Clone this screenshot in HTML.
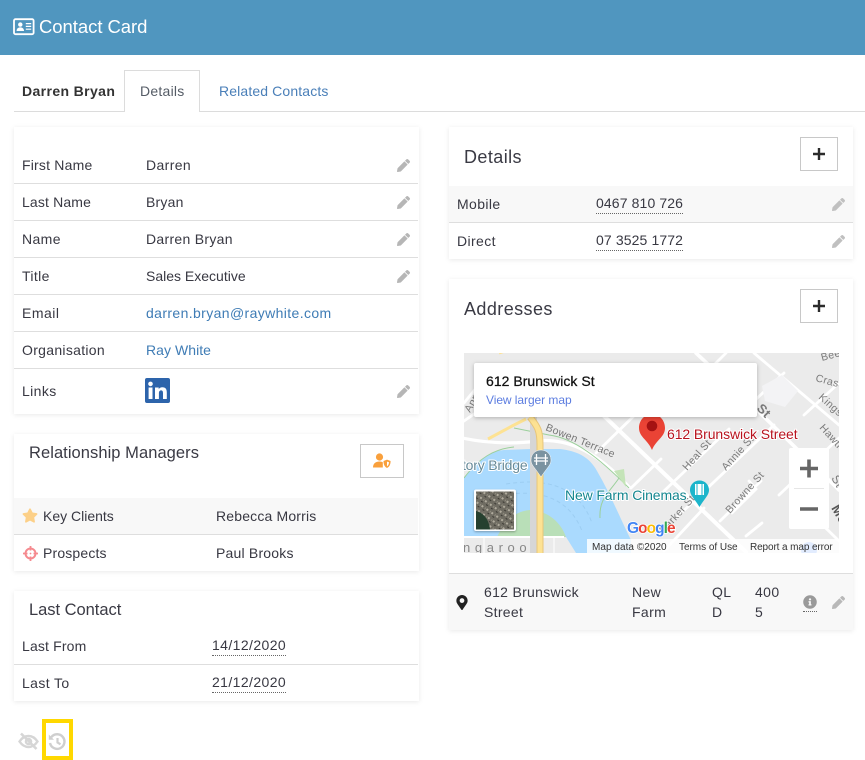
<!DOCTYPE html>
<html><head><meta charset="utf-8"><title>Contact Card</title>
<style>
*{box-sizing:border-box}
html,body{margin:0;padding:0;background:#fff}
body{width:865px;height:760px;position:relative;overflow:hidden;font:14px/20px "Liberation Sans",sans-serif;color:#383842;letter-spacing:.38px}
.hdr{position:absolute;left:0;top:0;width:865px;height:55px;background:#5096bf}
.t{position:absolute;white-space:nowrap;line-height:20px}
.card{position:absolute;background:#fff;box-shadow:0 1px 5px rgba(0,0,0,.09)}
.ln{position:absolute;height:1px;background:#dedede}
.bg{position:absolute;background:#f8f8f8}
.h{font-size:17.5px;letter-spacing:.42px;color:#3a3a44}
.a{color:#3f7cb5}
.d{border-bottom:1px dotted #666;line-height:19px}
.btn{position:absolute;width:38px;height:34px;border:1px solid #c8c8c8;background:#fff}
svg{position:absolute;display:block}
</style></head><body>
<div class="hdr"></div>
<svg style="left:13px;top:18px" width="22" height="18" viewBox="0 0 22 18"><rect x="1" y="1.2" width="19.6" height="15" rx="1.5" fill="none" stroke="#fff" stroke-width="1.8"/><circle cx="7.3" cy="6.6" r="2.2" fill="#fff"/><path d="M3.6 13c0-2.600 1.600-3.600 3.700-3.600s3.700 1 3.700 3.600z" fill="#fff"/><path d="M12.800 5.600h5.400M12.800 8.400h5.400M12.800 11.200h5.400" stroke="#fff" stroke-width="1.200"/></svg>
<div class="t" style="left:39px;top:17px;font-size:18.5px;color:#fff;letter-spacing:-.05px">Contact Card</div>

<div class="ln" style="left:14px;top:111px;width:851px;background:#dcdcdc"></div>
<div style="position:absolute;left:124px;top:70px;width:76px;height:42px;background:#fff;border:1px solid #dcdcdc;border-bottom:0"></div>
<div class="t" style="left:22px;top:81px;font-weight:bold;letter-spacing:.38px;color:#333">Darren Bryan</div>
<div class="t" style="left:140px;top:81px;color:#555c66;letter-spacing:.25px">Details</div>
<div class="t a" style="left:219px;top:81px;color:#4a7fb8;letter-spacing:.13px">Related Contacts</div>

<!-- card 1 -->
<div class="card" style="left:14px;top:127px;width:405px;height:287px"></div>
<div class="ln" style="left:14px;top:183px;width:404px"></div>
<div class="ln" style="left:14px;top:220px;width:404px"></div>
<div class="ln" style="left:14px;top:257px;width:404px"></div>
<div class="ln" style="left:14px;top:294px;width:404px"></div>
<div class="ln" style="left:14px;top:331px;width:404px"></div>
<div class="ln" style="left:14px;top:368px;width:404px"></div>
<div class="t" style="left:22px;top:155px;letter-spacing:.2px">First Name</div><div class="t" style="left:146px;top:155px">Darren</div>
<div class="t" style="left:22px;top:192px;letter-spacing:.15px">Last Name</div><div class="t" style="left:146px;top:192px;letter-spacing:.2px">Bryan</div>
<div class="t" style="left:22px;top:229px">Name</div><div class="t" style="left:146px;top:229px;letter-spacing:.3px">Darren Bryan</div>
<div class="t" style="left:22px;top:266px">Title</div><div class="t" style="left:146px;top:266px;letter-spacing:0">Sales Executive</div>
<div class="t" style="left:22px;top:303px;letter-spacing:.5px">Email</div><div class="t a" style="left:146px;top:303px">darren.bryan@raywhite.com</div>
<div class="t" style="left:22px;top:340px;letter-spacing:.3px">Organisation</div><div class="t a" style="left:146px;top:340px;letter-spacing:.05px">Ray White</div>
<div class="t" style="left:22px;top:381px">Links</div>
<svg style="left:145px;top:378px" width="25" height="25" viewBox="0 0 25 25"><rect width="25" height="25" rx="2" fill="#2d64ab"/><rect x="3.6" y="9.5" width="3.9" height="11.5" fill="#fff"/><circle cx="5.5" cy="5.9" r="2.3" fill="#fff"/><path d="M10 9.500h3.700v1.600c.7-1.100 2-1.900 3.700-1.900 3.200 0 4.400 2 4.400 5.200V21H18v-5.800c0-1.600-.4-2.800-1.900-2.800s-2.200 1.200-2.200 2.800V21H10z" fill="#fff"/></svg>
<svg style="display:none"><defs><path id="pen" d="M497.900 142.100l-46.100 46.100c-4.700 4.700-12.300 4.700-17 0l-111-111c-4.700-4.700-4.700-12.300 0-17l46.100-46.100c18.700-18.700 49.100-18.700 67.900 0l60.100 60.100c18.800 18.700 18.800 49.100 0 67.900zM284.200 99.800L21.600 362.400.4 483.900c-2.900 16.400 11.400 30.600 27.800 27.800l121.500-21.300 262.600-262.600c4.700-4.700 4.700-12.300 0-17l-111-111c-4.800-4.700-12.400-4.700-17.100 0z"/></defs></svg>
<svg style="left:397px;top:159px" width="13" height="13" viewBox="0 0 512 512" fill="#b6b6b6"><use href="#pen"/></svg>
<svg style="left:397px;top:196px" width="13" height="13" viewBox="0 0 512 512" fill="#b6b6b6"><use href="#pen"/></svg>
<svg style="left:397px;top:233px" width="13" height="13" viewBox="0 0 512 512" fill="#b6b6b6"><use href="#pen"/></svg>
<svg style="left:397px;top:270px" width="13" height="13" viewBox="0 0 512 512" fill="#b6b6b6"><use href="#pen"/></svg>
<svg style="left:397px;top:385px" width="13" height="13" viewBox="0 0 512 512" fill="#b6b6b6"><use href="#pen"/></svg>

<!-- card 2 -->
<div class="card" style="left:14px;top:434px;width:405px;height:137px"></div>
<div class="t h" style="left:29px;top:443px;font-size:16.5px;letter-spacing:.06px">Relationship Managers</div>
<div class="btn" style="left:360px;top:444px;width:44px"></div>
<svg style="left:373px;top:453px" width="18" height="16" viewBox="0 0 18 16"><circle cx="6.5" cy="4" r="3.6" fill="#f9a03c"/><path d="M0 14.500c0-4 2.600-6 6.500-6 1.300 0 2.400.2 3.300.7v5.300H0z" fill="#f9a03c"/><path d="M10.500 8l3.500-1.400L17.600 8c0 3.600-1.400 6-3.600 7-2.200-1-3.500-3.400-3.500-7z" fill="#f9a03c"/><path d="M14 8.600l2 .7c-.1 2-.8 3.200-2 4z" fill="#fff"/></svg>
<div class="bg" style="left:14px;top:498px;width:404px;height:36px"></div>
<div class="ln" style="left:14px;top:534px;width:404px"></div>
<svg style="left:22px;top:508px" width="16" height="15" viewBox="0 0 576 512" fill="#fcd088"><path d="M259.300 17.800L194 150.200 47.900 171.500c-26.200 3.800-36.700 36.100-17.700 54.600l105.700 103-25 145.500c-4.500 26.300 23.200 46 46.400 33.700L288 439.600l130.700 68.700c23.200 12.200 50.900-7.400 46.400-33.700l-25-145.500 105.700-103c19-18.500 8.500-50.800-17.700-54.600L382 150.200 316.700 17.800c-11.700-23.600-45.600-23.900-57.400 0z"/></svg>
<div class="t" style="left:43px;top:506px;letter-spacing:0">Key Clients</div><div class="t" style="left:216px;top:506px;letter-spacing:.17px">Rebecca Morris</div>
<svg style="left:23px;top:546px" width="15" height="15" viewBox="0 0 15 15" fill="none" stroke="#f58a8f"><circle cx="7.5" cy="7.5" r="5" stroke-width="2"/><path d="M7.500 0v4.500M7.500 10.500V15M0 7.500h4.500M10.500 7.500H15" stroke-width="1.800"/><circle cx="7.5" cy="7.5" r=".9" fill="#f58a8f" stroke="none"/></svg>
<div class="t" style="left:43px;top:543px;letter-spacing:.16px">Prospects</div><div class="t" style="left:216px;top:543px;letter-spacing:.2px">Paul Brooks</div>

<!-- card 3 -->
<div class="card" style="left:14px;top:591px;width:405px;height:110px"></div>
<div class="t h" style="left:29px;top:600px;font-size:16.5px;letter-spacing:-.03px">Last Contact</div>
<div class="ln" style="left:14px;top:664px;width:404px"></div>
<div class="t" style="left:22px;top:636px;letter-spacing:.16px">Last From</div><div class="t d" style="left:212px;top:636px;letter-spacing:.4px">14/12/2020</div>
<div class="t" style="left:22px;top:673px">Last To</div><div class="t d" style="left:212px;top:673px;letter-spacing:.4px">21/12/2020</div>
<svg style="left:18px;top:732px" width="21" height="19" viewBox="0 0 21 19" fill="none" stroke="#d6d6d6" stroke-width="2.400"><path d="M1.500 9.500C4 5.800 7 4 10.500 4s6.500 1.800 9 5.500c-2.500 3.700-5.500 5.500-9 5.500s-6.500-1.800-9-5.500z"/><circle cx="10.500" cy="9.500" r="2.600"/><path d="M3 1.500l15.500 15.500" stroke-width="2.600"/></svg>
<div style="position:absolute;left:42px;top:719px;width:31px;height:41px;border:4px solid #ffd800"></div>
<svg style="left:48px;top:733px" width="18" height="18" viewBox="0 0 18 18" fill="none" stroke="#cfcfcf" stroke-width="2.400"><path d="M3.300 4.200A7.300 7.300 0 1 1 2 10"/><path d="M.8 1.500v5.200H6z" fill="#cfcfcf" stroke="none"/><path d="M9.500 5v4.500l3 1.800" stroke-width="2.200"/></svg>

<!-- right 1 -->
<div class="card" style="left:449px;top:127px;width:404px;height:132px"></div>
<div class="t h" style="left:464px;top:147px;font-size:18px">Details</div>
<div class="btn" style="left:800px;top:137px"></div>
<svg style="left:813px;top:148px" width="12" height="12" viewBox="0 0 12 12"><path d="M6 0v12M0 6h12" stroke="#2b2b2b" stroke-width="2.400"/></svg>
<div class="bg" style="left:449px;top:186px;width:404px;height:36px"></div>
<div class="ln" style="left:449px;top:222px;width:404px"></div>
<div class="t" style="left:457px;top:194px">Mobile</div><div class="t d" style="left:596px;top:194px;letter-spacing:.12px">0467 810 726</div>
<div class="t" style="left:457px;top:231px">Direct</div><div class="t d" style="left:596px;top:231px;letter-spacing:.12px">07 3525 1772</div>
<svg style="left:832px;top:198px" width="13" height="13" viewBox="0 0 512 512" fill="#c0c0c0"><use href="#pen"/></svg>
<svg style="left:832px;top:235px" width="13" height="13" viewBox="0 0 512 512" fill="#c0c0c0"><use href="#pen"/></svg>

<!-- right 2 -->
<div class="card" style="left:449px;top:279px;width:404px;height:351px"></div>
<div class="t h" style="left:464px;top:299px;font-size:18px">Addresses</div>
<div class="btn" style="left:800px;top:289px"></div>
<svg style="left:813px;top:300px" width="12" height="12" viewBox="0 0 12 12"><path d="M6 0v12M0 6h12" stroke="#2b2b2b" stroke-width="2.400"/></svg>

<svg style="left:464px;top:353px" width="375" height="200" viewBox="0 0 375 200" font-family="Liberation Sans, sans-serif">
<defs><pattern id="sat" width="6" height="6" patternUnits="userSpaceOnUse" patternTransform="rotate(35)"><rect width="6" height="6" fill="#6f6c62"/><rect x="0" y="0" width="2" height="2" fill="#b0ab9d"/><rect x="3" y="3" width="2" height="1" fill="#3c3a34"/><rect x="4" y="0" width="1" height="2" fill="#8f8b7e"/></pattern></defs>
<rect width="375" height="200" fill="#ebebeb"/>
<!-- white roads -->
<g stroke="#fff" stroke-width="2.800" fill="none" stroke-linecap="round">
<path d="M140 63L282 199" stroke-width="4"/>
<path d="M232 0L293 57L375 137" stroke-width="3.600"/>
<path d="M290 0L375 72"/>
<path d="M-2 85C30 92 60 90 72 88C100 85 130 95 165 134" stroke-width="3.200"/>
<path d="M132 100L178 55M167 135L197 106M200 138L265 76M213 164L310 72M256 168L297 128M315 142L375 85"/>
<path d="M285 128L292 136L268 160M330 144L375 188M240 155L200 198M282 183L298 170"/>
<path d="M262 0L220 42M320 20L288 50M375 30L340 62"/>
<path d="M0 50L18 28M0 68L26 50"/>
</g>
<path d="M298 33l20-11 16 16-13 16-20-6z" fill="#f3f3f5"/>
<!-- water -->
<path d="M0 125C10 110 25 98 40 97L66 96H96C112 98 125 103 133 118C146 140 156 165 167 187V200H0z" fill="#aadafe"/>
<path d="M33 184C40 170 50 158 66 157C85 158 97 170 102 184z" fill="#b9dfb8"/>
<path d="M0 184H102L112 200H0z" fill="#ebebeb"/>
<path d="M0 184H100" stroke="#fff" stroke-width="2"/><path d="M20 184v16M90 184v16" stroke="#fff"/>
<path d="M42 131Q110 120 128 170M38 142Q100 132 118 178" fill="none" stroke="#9ccdf2" stroke-dasharray="4 3"/>
<!-- green paths -->
<path d="M50 75L85 82C110 85 135 105 165 135M0 125C15 105 30 96 50 94M155 125C145 140 135 145 136 165" fill="none" stroke="#9bd09b"/>
<path d="M150 118l12 16-2-18z" fill="#c4e4b8"/>
<!-- bridge -->
<rect x="66" y="62" width="7" height="138" fill="#d6d6d6"/>
<path d="M66 64C74 74 76 78 76 92V200" fill="none" stroke="#e8c67a" stroke-width="7"/>
<path d="M66 64C74 74 76 78 76 92V200" fill="none" stroke="#fde293" stroke-width="5"/>
<path d="M35 0L50 -5M62 66L50 72M24 86L50 72" fill="none" stroke="#fde293" stroke-width="3"/>
<!-- labels -->
<g fill="#7a7a7a" font-size="10.500">
<text transform="translate(81 77) rotate(22)" fill="#757575" letter-spacing=".3">Bowen Terrace</text>
<text transform="translate(223 118) rotate(-48)">Heal St</text>
<text transform="translate(262 118) rotate(-48)">Annie St</text>
<text transform="translate(266 161) rotate(-48)">Browne St</text>
<text transform="translate(200 181) rotate(-48)">Parker St</text>
<text transform="translate(358 8) rotate(-15)">Beeston</text>
<text transform="translate(351 28) rotate(15)">Crase</text>
<text transform="translate(354 45) rotate(42)">Kingsholme</text>
<text transform="translate(355 75) rotate(48)">Hawthorne</text>
<text transform="translate(6 60) rotate(-60)">Ann</text>
<text transform="translate(292 56) rotate(45)" font-size="13" font-weight="bold">St</text>
<text transform="translate(367 125) rotate(60)" font-size="12">St</text>
<text transform="translate(367 155) rotate(60)" font-size="13" font-weight="bold" fill="#555">Mo</text>
</g>
<text x="-2" y="117" font-size="14" fill="#668a99" textLength="66" stroke="#fff" stroke-width="2" paint-order="stroke">tory Bridge</text>
<text x="-1" y="199" font-size="13" fill="#888" textLength="64" lengthAdjust="spacing">ngaroo</text>
<path d="M87 107c0-6-4.500-10-10-10s-10 4-10 10c0 5 3.500 7 10 17C83.500 114 87 112 87 107z" fill="#7b93a1" stroke="#fff" stroke-width=".5"/>
<path d="M72.500 101v11M81.500 101v11M70 105h14M70 108h14" stroke="#fff" stroke-width="1.300"/>
<text x="101" y="147" font-size="14" fill="#14868f" textLength="122" stroke="#fff" stroke-width="2" paint-order="stroke">New Farm Cinemas</text>
<path d="M245 137c0-5.500-4.200-9.500-9.500-9.500S226 131.500 226 137c0 5 4 8 9.500 17C241 145 245 142 245 137z" fill="#1cb5cb"/>
<rect x="231" y="131" width="9" height="11" fill="#fff"/><path d="M233 131v11M238 131v11" stroke="#1cb5cb"/>
<text x="203" y="86" font-size="14" fill="#b8131e" textLength="131" stroke="#fff" stroke-width="2" paint-order="stroke">612 Brunswick Street</text>
<!-- pin -->
<path d="M201 75c0-8-6-14-13-14s-13 6-13 14c0 9 9 12 13 22c4-10 13-13 13-22z" fill="#ea4335"/><circle cx="188" cy="73" r="5.300" fill="#a51212"/>
<!-- tile -->
<rect x="10" y="136.500" width="42" height="41.500" rx="2" fill="#fff" style="filter:drop-shadow(0 1px 1px rgba(0,0,0,.3))"/>
<rect x="12" y="138.500" width="38" height="38" fill="url(#sat)"/>
<path d="M12 158c8 2 13 9 14 18.500H12z" fill="#26402f"/>
<!-- info window -->
<rect x="10" y="10" width="283" height="54" rx="2" fill="#fff" style="filter:drop-shadow(0 1px 2px rgba(0,0,0,.25))"/>
<text x="22" y="33" font-size="14" fill="#111" stroke="#111" stroke-width=".25" textLength="109">612 Brunswick St</text>
<text x="22" y="51" font-size="12" fill="#5c7de0" textLength="86">View larger map</text>
<!-- google -->
<text x="163" y="180" font-size="15.500" font-weight="bold" textLength="49" stroke="#fff" stroke-width="1.500" paint-order="stroke"><tspan fill="#4285f4">G</tspan><tspan fill="#ea4335">o</tspan><tspan fill="#fbbc05">o</tspan><tspan fill="#4285f4">g</tspan><tspan fill="#34a853">l</tspan><tspan fill="#ea4335">e</tspan></text>
<!-- zoom -->
<rect x="325" y="95" width="40" height="81" rx="2" fill="#fff"/>
<path d="M330 135.500h30" stroke="#e6e6e6"/>
<path d="M345 106.500v18M336 115.500h18M336 156h18" stroke="#666" stroke-width="3.600"/>
<!-- footer -->
<circle cx="345" cy="197" r="8" fill="#5e97f6"/>
<rect x="123" y="186" width="252" height="14" fill="#fff" opacity=".82"/>
<text x="128" y="197" font-size="10" fill="#333" textLength="75">Map data ©2020</text>
<text x="215" y="197" font-size="10" fill="#333" textLength="59">Terms of Use</text>
<text x="286" y="197" font-size="10" fill="#333" textLength="83">Report a map error</text>
</svg>

<div class="ln" style="left:449px;top:573px;width:404px"></div>
<div class="bg" style="left:449px;top:574px;width:404px;height:56px"></div>
<svg style="left:456px;top:595px" width="12" height="15" viewBox="0 0 384 512" fill="#222"><path d="M172.268 501.670C26.970 291.031 0 268.413 0 192 0 85.961 85.961 0 192 0s192 85.961 192 192c0 76.413-26.970 99.031-172.268 309.670-9.535 13.774-29.930 13.773-39.464 0zM192 272c44.183 0 80-35.817 80-80s-35.817-80-80-80-80 35.817-80 80 35.817 80 80 80z"/></svg>
<div class="t" style="left:484px;top:582px;letter-spacing:.3px">612 Brunswick<br>Street</div>
<div class="t" style="left:632px;top:582px">New<br>Farm</div>
<div class="t" style="left:712px;top:582px">QL<br>D</div>
<div class="t" style="left:755px;top:582px">400<br>5</div>
<svg style="left:803px;top:595px" width="14" height="14" viewBox="0 0 512 512" fill="#9a9a9a"><path d="M256 8C119.043 8 8 119.083 8 256c0 136.997 111.043 248 248 248s248-111.003 248-248C504 119.083 392.957 8 256 8zm0 110c23.196 0 42 18.804 42 42s-18.804 42-42 42-42-18.804-42-42 18.804-42 42-42zm56 254c0 6.627-5.373 12-12 12h-88c-6.627 0-12-5.373-12-12v-24c0-6.627 5.373-12 12-12h12v-64h-12c-6.627 0-12-5.373-12-12v-24c0-6.627 5.373-12 12-12h64c6.627 0 12 5.373 12 12v100h12c6.627 0 12 5.373 12 12v24z"/></svg>
<div style="position:absolute;left:803px;top:611px;width:14px;border-top:1px dotted #666"></div>
<svg style="left:832px;top:596px" width="13" height="13" viewBox="0 0 512 512" fill="#b8b8b8"><use href="#pen"/></svg>
</body></html>
